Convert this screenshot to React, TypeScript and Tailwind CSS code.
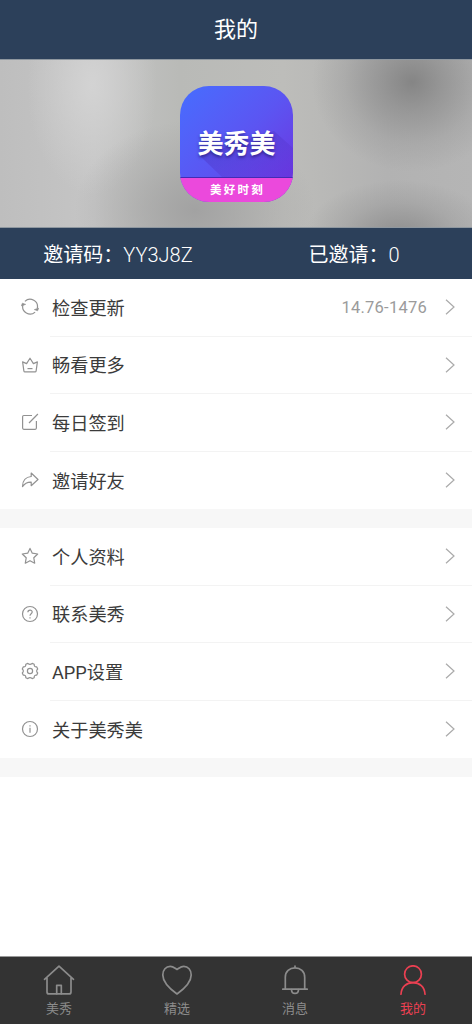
import type { ReactNode } from "react";

type Item = { label: string; icon: ReactNode; value?: string };

const accountItems: Item[] = [
  {
    label: "检查更新",
    value: "14.76-1476",
    icon: (
      <>
        <path d="M3.9 3.4A7.4 7.4 0 0 1 16.2 10.6M14.1 14.1A7.4 7.4 0 0 1 1.9 6.9" />
        <path d="M.4 7.8 1.4 5.2 4.6 6.4zM17.6 10.2 16.6 12.8 13.4 11.6z" fill="currentColor" strokeWidth=".7" />
      </>
    ),
  },
  {
    label: "畅看更多",
    icon: (
      <>
        <path d="M1.6 5.9 5.6 7.6 9 2.2l3.4 5.4 4-1.7-1.3 9.2q-.2.8-1 .8H3.9q-.8 0-1-.8z" />
        <path d="M6.5 12.6h5" />
      </>
    ),
  },
  {
    label: "每日签到",
    icon: (
      <>
        <path d="M11 2.5H2.8q-1.2 0-1.2 1.2v11.4q0 1.2 1.2 1.2h11.4q1.2 0 1.2-1.2V8" />
        <path d="m8 10 8.9-9" />
      </>
    ),
  },
  {
    label: "邀请好友",
    icon: (
      <path d="M10.2 2 17 8.5l-6.8 6.2v-3.6C6.5 11 3.8 12 1.5 15.6 1.5 9.7 5 5.9 10.2 5.5z" />
    ),
  },
];

const settingItems: Item[] = [
  {
    label: "个人资料",
    icon: (
      <path d="m9 1.4 2.3 4.8 5.4.8-3.9 3.8.9 5.4L9 13.7l-4.7 2.5.9-5.4L1.3 7l5.4-.8z" />
    ),
  },
  {
    label: "联系美秀",
    icon: (
      <>
        <circle cx="9" cy="9" r="7.5" />
        <path d="M6.9 7.3C6.9 4.5 11.2 4.5 11.2 7.1 11.2 8.8 9 8.8 9 10.8M9 12.3v1.1" />
      </>
    ),
  },
  {
    label: "APP设置",
    icon: (
      <>
        <path d="M6.8 1.4Q9 3.4 11.2 1.4L13.2 2.3Q13 5.2 15.8 4.9L16.7 7Q14.6 9 16.7 11L15.8 13.1Q13 12.8 13.2 15.7L11.2 16.6Q9 14.6 6.8 16.6L4.8 15.7Q5 12.8 2.2 13.1L1.3 11Q3.4 9 1.3 7L2.2 4.9Q5 5.2 4.8 2.3z" />
        <circle cx="9" cy="9" r="2.6" />
      </>
    ),
  },
  {
    label: "关于美秀美",
    icon: (
      <>
        <circle cx="9" cy="9" r="7.5" />
        <path d="M9 7.7v5M9 5.2v1.2" />
      </>
    ),
  },
];

const tabs = [
  {
    label: "美秀",
    icon: (
      <>
        <path d="M1.5 14.3 16 1.2l14.5 13.1M4 12.7v14.2q0 2 2 2h20q2 0 2-2V12.7" />
        <path d="M13.7 28.7v-8.4h4.6v8.4" />
      </>
    ),
  },
  {
    label: "精选",
    icon: (
      <path d="M16 29C8.5 23.5 1.8 17.2 1.8 9.9 1.8 5 5 1.4 9.2 1.4c2.8 0 4.4 1.6 6.8 3.1 2.4-1.5 4-3.1 6.8-3.1 4.2 0 7.4 3.6 7.4 8.5 0 7.3-6.7 13.6-14.2 19.1z" />
    ),
  },
  {
    label: "消息",
    icon: (
      <>
        <path d="M6.3 24V12.2C6.3 6.7 10.5 2.9 16 2.9s9.7 3.8 9.7 9.3V24M3.8 24.2h24.4M16 1v1.9" />
        <path d="M12.5 24.7c.2 5 6.8 5 7 0" />
      </>
    ),
  },
  {
    label: "我的",
    active: true,
    icon: (
      <>
        <circle cx="16" cy="9.2" r="8.4" />
        <path d="M4 29.2C4.4 22 9.5 17.6 16 17.6S27.6 22 28 29.2" />
      </>
    ),
  },
];

const MenuList = ({ items }: { items: Item[] }) => (
  <div className="bg-white">
    {items.map((item, index) => (
      <div key={item.label} className="flex h-[57.5px] items-center pl-[21px]">
        <svg
          className="mb-px h-[18px] w-[18px] shrink-0 text-[#929292]"
          viewBox="0 0 18 18"
          fill="none"
          stroke="currentColor"
          strokeWidth="1.2"
          strokeLinejoin="round"
        >
          {item.icon}
        </svg>
        <div
          className={`ml-[11px] flex h-full flex-1 items-center pr-[17px] pl-0.5 ${
            index < items.length - 1 ? "border-b border-[#f3f3f3]" : ""
          }`}
        >
          <span className="flex-1 pt-[3px] text-[18.2px] text-[#3b3b3b]">{item.label}</span>
          {item.value && (
            <span className="mr-[18px] pt-0.5 font-['Roboto',sans-serif] text-[16.5px] tracking-[0.25px] text-[#9b9b9b]">
              {item.value}
            </span>
          )}
          <svg className="h-4 w-2.5" viewBox="0 0 10 16" fill="none" stroke="#aaa" strokeWidth="1.2">
            <path d="m1 .8 8 7.2-8 7.2" />
          </svg>
        </div>
      </div>
    ))}
  </div>
);

const App = () => {
  return (
    <div className="flex h-[1024px] w-[472px] flex-col overflow-hidden bg-white font-['Roboto','Noto_Sans_CJK_SC',sans-serif] leading-none">
      <header className="flex h-[59px] shrink-0 items-center justify-center bg-[#2c405a] pt-px text-[22px] text-white">
        我的
      </header>

      <div className="flex h-[169px] shrink-0 justify-center border-y border-[#8e979f] bg-[radial-gradient(ellipse_100px_90px_at_412px_22px,#858585_0%,#858585a0_30%,#85858538_68%,#85858500_100%),radial-gradient(ellipse_95px_55px_at_400px_175px,#8f8f8f_0%,#8f8f8f50_60%,#8f8f8f00_100%),radial-gradient(ellipse_120px_90px_at_195px_150px,#a2a2a2_0%,#a2a2a260_60%,#a2a2a200_100%),radial-gradient(ellipse_65px_110px_at_92px_25px,#d3d3d3_0%,#d3d3d360_60%,#d3d3d300_100%),linear-gradient(90deg,#bebebe_0%,#c5c5c5_20%,#b9bab7_38%,#bdbdba_60%,#b2b2b2_82%,#b5b5b5_100%)] pt-[26px]">
        <div className="relative mr-[-1px] flex h-[116px] w-[113px] flex-col overflow-hidden rounded-[29px] bg-linear-to-br from-[#456dff] via-[#5b55f2] to-[#6c2bdc]">
          <svg className="absolute inset-0" width="113" height="92" viewBox="0 0 113 92">
            <defs>
              <linearGradient id="shade" x1="0" y1="0" x2="1" y2="1">
                <stop offset="0" stopColor="#4034b8" stopOpacity=".55" />
                <stop offset="1" stopColor="#6030d2" stopOpacity=".15" />
              </linearGradient>
            </defs>
            <path d="M20 70 94 45l19 17v30H43z" fill="url(#shade)" />
          </svg>
          <div className="relative flex flex-1 items-end justify-center border-b border-[#442bb5] pb-5 text-[26px] font-bold text-white text-shadow-[0_2px_3px_rgb(30_20_100/0.6)]">
            美秀美
          </div>
          <div className="relative flex h-6 items-center justify-center bg-[#eb49dc] pt-px pl-0.5 text-[11.5px] font-bold tracking-[2.2px] text-white">
            美好时刻
          </div>
        </div>
      </div>

      <div className="flex h-[51px] shrink-0 items-center bg-[#2c405a] pt-[3px] text-[20px] text-white">
        <div className="flex flex-1 justify-center">
          邀请码：<span className="font-light">YY3J8Z</span>
        </div>
        <div className="flex flex-1 justify-center">
          已邀请：<span className="font-light">0</span>
        </div>
      </div>

      <MenuList items={accountItems} />
      <div className="h-[19px] shrink-0 bg-[#f7f7f7]" />
      <MenuList items={settingItems} />
      <div className="h-[19px] shrink-0 bg-[#f7f7f7]" />

      <nav className="mt-auto flex h-[68px] shrink-0 border-t border-[#999] bg-[#333]">
        {tabs.map((tab) => (
          <div
            key={tab.label}
            className={`flex flex-1 flex-col items-center pt-2 ${tab.active ? "text-[#eb4052]" : "text-[#8c8c8c]"}`}
          >
            <svg
              className="h-8 w-8"
              viewBox="0 0 32 32"
              fill="none"
              stroke="currentColor"
              strokeWidth="1.7"
              strokeLinecap="round"
              strokeLinejoin="round"
            >
              {tab.icon}
            </svg>
            <span className="mt-[5px] text-[13px]">{tab.label}</span>
          </div>
        ))}
      </nav>
    </div>
  );
};

export default App;
